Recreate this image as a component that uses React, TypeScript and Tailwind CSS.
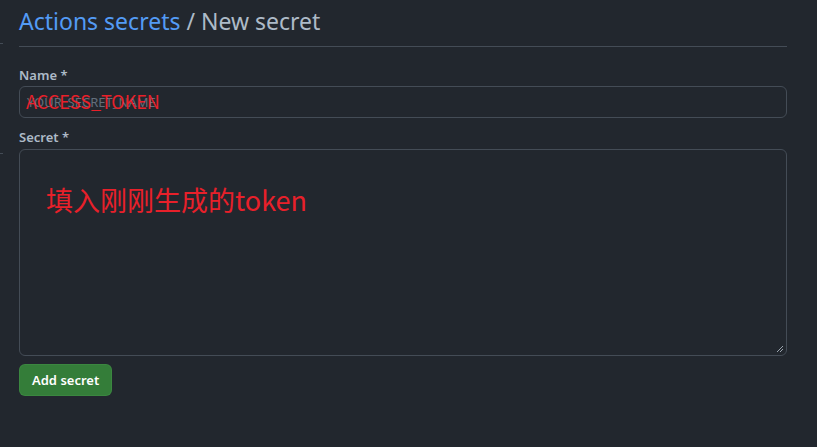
import React from 'react';

const ui = { fontFamily: '"Segoe UI", "Noto Sans", "Liberation Sans", sans-serif' };
const red = { fontFamily: '"Noto Sans CJK SC", "Noto Sans", sans-serif' };

export default function App() {
  return (
    <div className="relative w-[817px] h-[447px] bg-[#22272e] overflow-hidden" style={ui}>
      {/* stray marks on the left edge */}
      <div className="absolute left-0 top-[43px] w-[3px] h-px bg-[#444c56]" />
      <div className="absolute left-0 top-[153px] w-[3px] h-px bg-[#444c56]" />

      <div className="w-[768px] ml-[19px] flex flex-col">
        <div className="pt-[6px] pb-[10px] border-b border-[#444c56]">
          <h2 className="text-[23px] leading-[30px] font-normal text-[#adbac7]">
            <span className="text-[#539bf5]">Actions secrets</span> / New secret
          </h2>
        </div>

        <div className="mt-[18px] flex flex-col gap-[1px]">
          <label className="text-[13px] leading-[20px] font-semibold text-[#adbac7]">Name *</label>
          <div className="grid items-center h-[32px] pl-[6px] rounded-md border border-[#444c56] bg-[#22272e]">
            <span className="col-start-1 row-start-1 pl-[1px] text-[13px] leading-[18px] text-[#636e7b]">YOUR_SECRET_NAME</span>
            <span className="col-start-1 row-start-1 text-[18px] leading-[22px] text-[#e8202a] -mt-[3px]" style={red}>ACCESS_TOKEN</span>
          </div>
        </div>

        <div className="mt-[9px] flex flex-col gap-[2px]">
          <label className="text-[13px] leading-[20px] font-semibold text-[#adbac7]">Secret *</label>
          <div className="relative h-[207px] pl-[26px] pt-[32px] rounded-md border border-[#444c56] bg-[#22272e]">
            <span className="text-[27px] leading-[36px] text-[#e8202a]" style={red}>填入刚刚生成的token</span>
            <svg className="absolute right-[2px] bottom-[2px]" width="8" height="8" viewBox="0 0 8 8">
              <path d="M7 1 L1 7 M7 4 L4 7" stroke="#9aa4ae" strokeWidth="1" />
            </svg>
          </div>
        </div>

        <div className="mt-[8px] flex">
          <button className="h-[32px] px-[12px] rounded-md border border-[#46954a]/40 bg-[#347d39] text-white text-[13px] font-semibold leading-[20px]">
            Add secret
          </button>
        </div>
      </div>
    </div>
  );
}
